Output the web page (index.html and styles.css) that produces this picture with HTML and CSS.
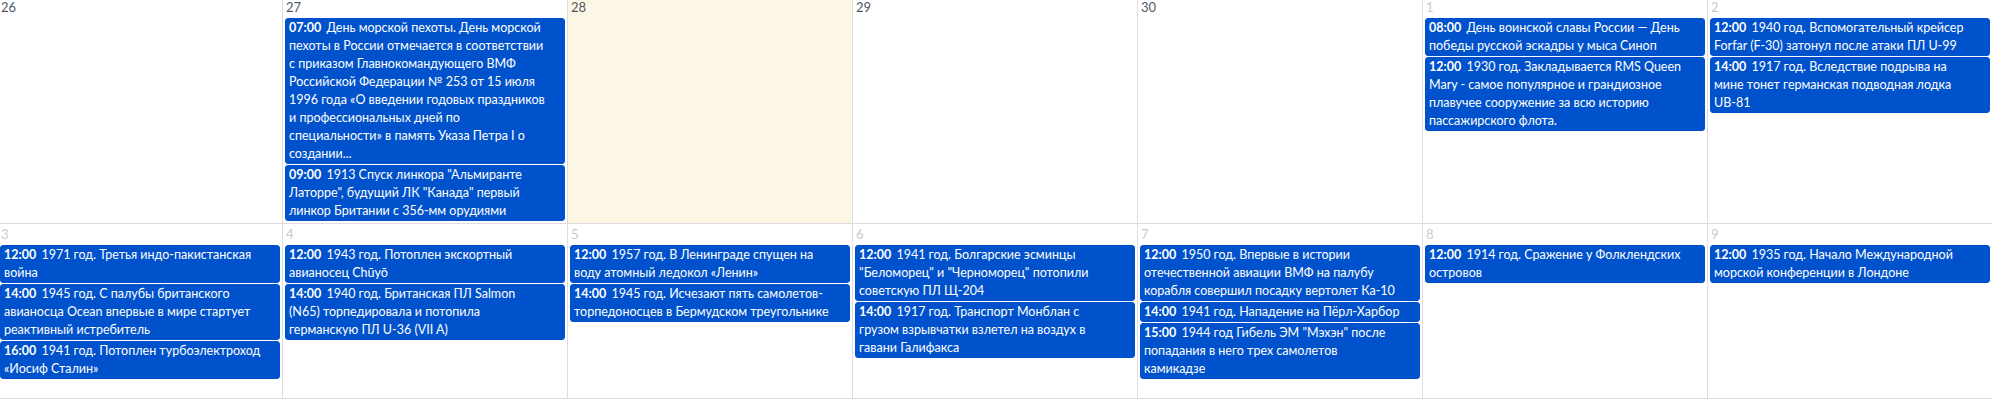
FILE: index.html
```html
<!DOCTYPE html>
<html lang="ru">
<head>
<meta charset="utf-8">
<title>Календарь</title>
<link rel="stylesheet" href="styles.css">
</head>
<body>
<div class="month">
  <div class="week">
    <div class="day"><div class="day-num">26</div></div>
    <div class="day">
      <div class="day-num">27</div>
      <div class="event"><span class="event-time">07:00</span> День морской пехоты. День морской пехоты в России отмечается в соответствии с приказом Главнокомандующего ВМФ Российской Федерации № 253 от 15 июля 1996 года «О введении годовых праздников и профессиональных дней по специальности» в память Указа Петра I о создании...</div>
      <div class="event"><span class="event-time">09:00</span> 1913 Спуск линкора "Альмиранте Латорре", будущий ЛК "Канада" первый линкор Британии с 356-мм орудиями</div>
    </div>
    <div class="day day--today"><div class="day-num">28</div></div>
    <div class="day"><div class="day-num">29</div></div>
    <div class="day"><div class="day-num">30</div></div>
    <div class="day day--other">
      <div class="day-num">1</div>
      <div class="event"><span class="event-time">08:00</span> День воинской славы России — День победы русской эскадры у мыса Синоп</div>
      <div class="event"><span class="event-time">12:00</span> 1930 год. Закладывается RMS Queen Mary - самое популярное и грандиозное плавучее сооружение за всю историю пассажирского флота.</div>
    </div>
    <div class="day day--other">
      <div class="day-num">2</div>
      <div class="event"><span class="event-time">12:00</span> 1940 год. Вспомогательный крейсер Forfar (F-30) затонул после атаки ПЛ U-99</div>
      <div class="event"><span class="event-time">14:00</span> 1917 год. Вследствие подрыва на мине тонет германская подводная лодка UB-81</div>
    </div>
  </div>
  <div class="week">
    <div class="day day--other">
      <div class="day-num">3</div>
      <div class="event"><span class="event-time">12:00</span> 1971 год. Третья индо-пакистанская война</div>
      <div class="event"><span class="event-time">14:00</span> 1945 год. С палубы британского авианосца Ocean впервые в мире стартует реактивный истребитель</div>
      <div class="event"><span class="event-time">16:00</span> 1941 год. Потоплен турбоэлектроход «Иосиф Сталин»</div>
    </div>
    <div class="day day--other">
      <div class="day-num">4</div>
      <div class="event"><span class="event-time">12:00</span> 1943 год. Потоплен экскортный авианосец Chūyō</div>
      <div class="event"><span class="event-time">14:00</span> 1940 год. Британская ПЛ Salmon (N65) торпедировала и потопила германскую ПЛ U-36 (VII A)</div>
    </div>
    <div class="day day--other">
      <div class="day-num">5</div>
      <div class="event"><span class="event-time">12:00</span> 1957 год. В Ленинграде спущен на воду атомный ледокол «Ленин»</div>
      <div class="event"><span class="event-time">14:00</span> 1945 год. Исчезают пять самолетов-торпедоносцев в Бермудском треугольнике</div>
    </div>
    <div class="day day--other">
      <div class="day-num">6</div>
      <div class="event"><span class="event-time">12:00</span> 1941 год. Болгарские эсминцы "Беломорец" и "Черноморец" потопили советскую ПЛ Щ-204</div>
      <div class="event"><span class="event-time">14:00</span> 1917 год. Транспорт Монблан с грузом взрывчатки взлетел на воздух в гавани Галифакса</div>
    </div>
    <div class="day day--other">
      <div class="day-num">7</div>
      <div class="event"><span class="event-time">12:00</span> 1950 год. Впервые в истории отечественной авиации ВМФ на палубу корабля совершил посадку вертолет Ка-10</div>
      <div class="event"><span class="event-time">14:00</span> 1941 год. Нападение на Пёрл-Харбор</div>
      <div class="event"><span class="event-time">15:00</span> 1944 год Гибель ЭМ "Мэхэн" после попадания в него трех самолетов камикадзе</div>
    </div>
    <div class="day day--other">
      <div class="day-num">8</div>
      <div class="event"><span class="event-time">12:00</span> 1914 год. Сражение у Фолклендских островов</div>
    </div>
    <div class="day day--other">
      <div class="day-num">9</div>
      <div class="event"><span class="event-time">12:00</span> 1935 год. Начало Международной морской конференции в Лондоне</div>
    </div>
  </div>
</div>
</body>
</html>
```
FILE: styles.css
```css
html, body {
  margin: 0;
  padding: 0;
  background: #ffffff;
  overflow: hidden;
}

body {
  font-family: "Lato", "Liberation Sans", sans-serif;
  font-size: 13px;
  color: #333;
}

.month {
  width: 1995px;
  margin: -4px 0 0 -3px;
  border-bottom: 1px solid #dddde2;
}

.week {
  display: grid;
  grid-template-columns: repeat(7, 1fr);
  min-height: 175px;
  border-top: 1px solid #dddde2;
  box-sizing: border-box;
}

.day {
  border-left: 1px solid #dddde2;
  padding-bottom: 2px;
  min-width: 0;
}

.day--today {
  background: #fcf7e4;
}

.day-num {
  padding: 2px 3px;
  line-height: 16px;
  font-size: 13px;
  color: #4f5868;
}

.day--other .day-num {
  color: #c9cad1;
}

.event {
  margin: 1px 2px 0;
  padding: 0 18px 0 3px;
  border: 1px solid #0052cc;
  border-radius: 3px;
  background: #0052cc;
  color: #ffffff;
  font-size: 12.5px;
  line-height: 18px;
}

.event-time {
  font-weight: bold;
  margin-right: 2px;
}
```
